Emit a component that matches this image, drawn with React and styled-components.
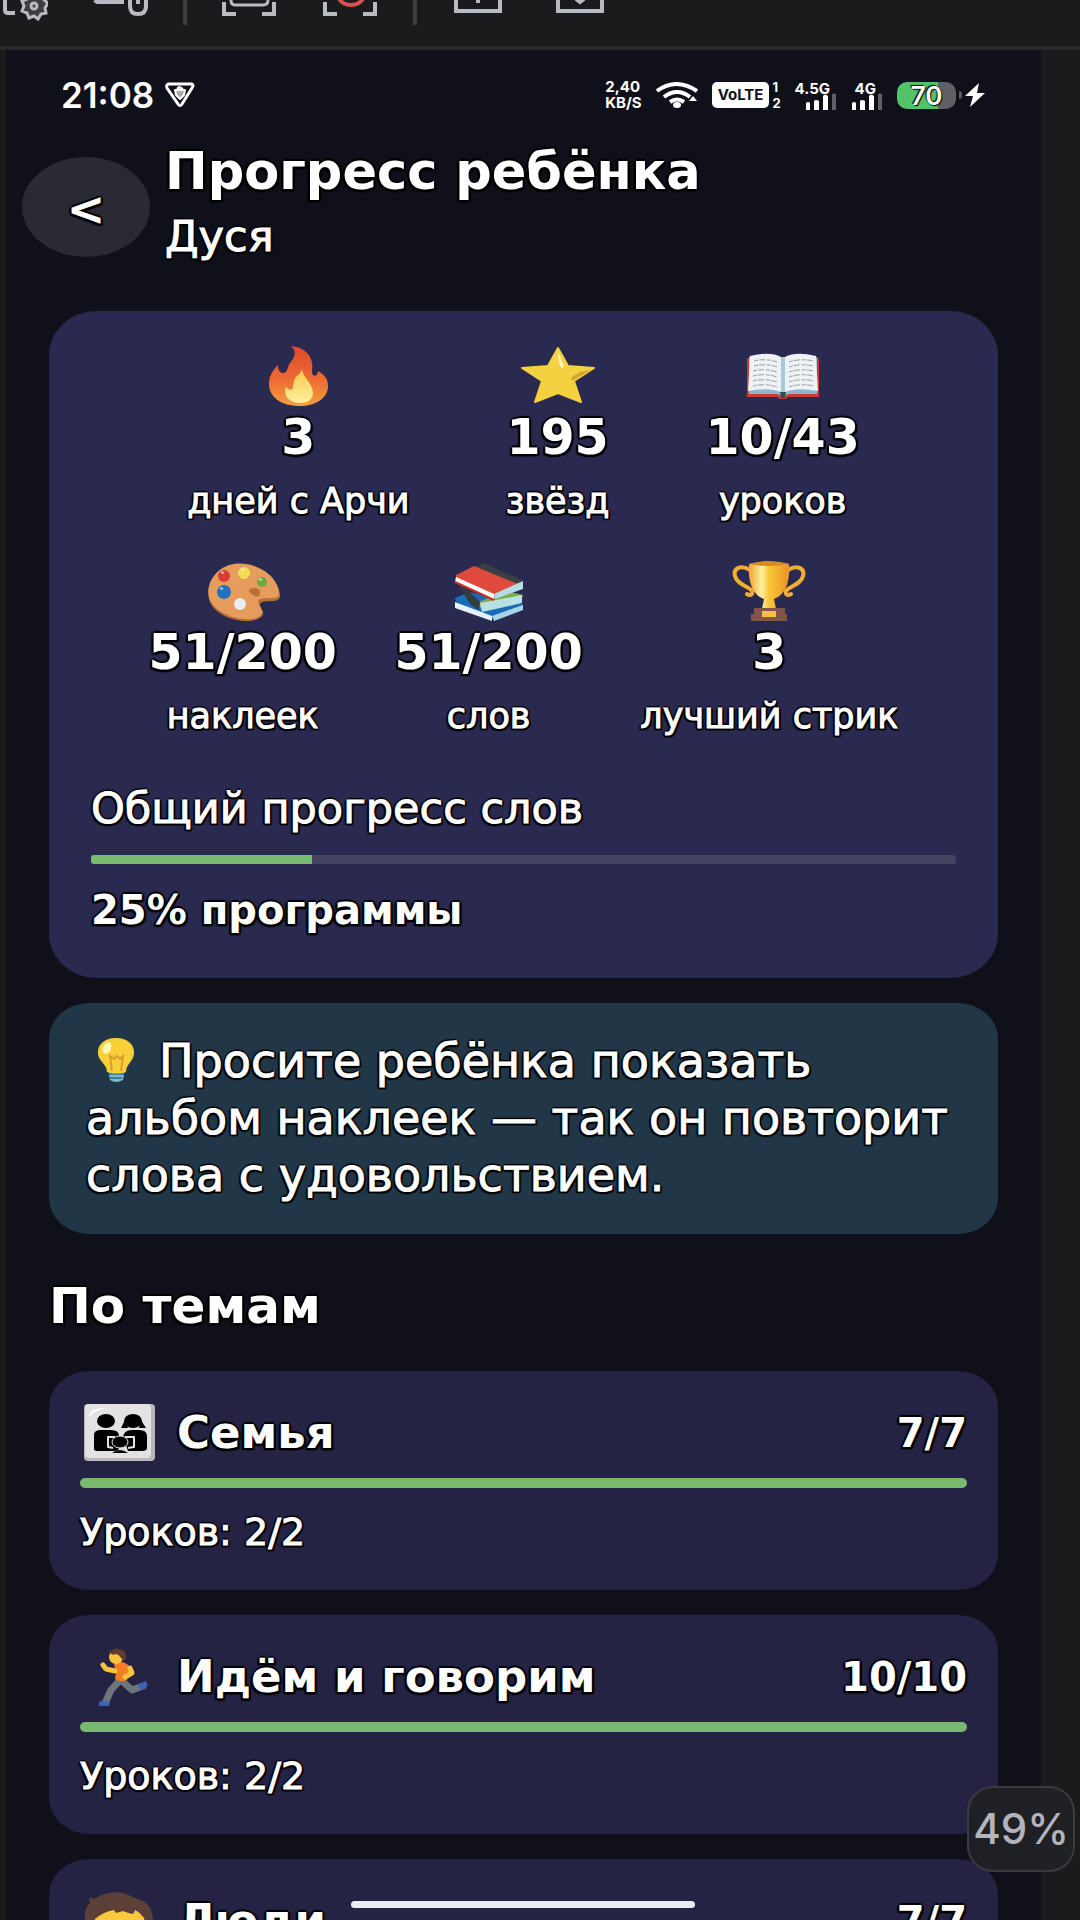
import React from "react";
import styled, { createGlobalStyle } from "styled-components";

const GlobalStyle = createGlobalStyle`
  * {
    box-sizing: border-box;
  }
  body {
    margin: 0;
    overflow: hidden;
    background: #1a1b1c;
    color: #fff;
    font-family: "DejaVu Sans", Verdana, sans-serif;
  }
  h1, h2, h3, p {
    margin: 0;
  }
`;

const outline = `
  text-shadow: 2px 0 1px #000, -2px 0 1px #000, 0 2px 1px #000,
    0 -2px 1px #000, 1px 2px 1px #000, -1px 2px 1px #000,
    2px 2px 1px #000, -2px 2px 1px #000;
`;

const medium = `
  -webkit-text-stroke: 1px #fff;
  ${outline}
`;

const Window = styled.div`
  position: relative;
  display: flex;
  flex-direction: column;
  height: 100vh;
  overflow: hidden;
`;

const Toolbar = styled.div`
  display: flex;
  flex-shrink: 0;
  gap: 33px;
  height: 50px;
  border-bottom: 4px solid #29292d;
`;

const ToolGroup = styled.div`
  display: flex;
  gap: 44px;
`;

const ToolButton = styled.button`
  height: 24px;
  padding: 0;
  border: none;
  background: none;
  svg {
    display: block;
  }
`;

const Divider = styled.span`
  width: 4px;
  height: 25px;
  background: #3c3d40;
`;

const Screen = styled.main`
  flex: 1;
  min-height: 0;
  margin: 0 39px 0 6px;
  overflow: hidden;
  background: #10101a;
`;

const StatusBar = styled.div`
  display: flex;
  justify-content: space-between;
  align-items: center;
  height: 90px;
  padding: 0 55px;
`;

const StatusGroup = styled.div`
  display: flex;
  align-items: center;
  gap: ${({ gap }) => gap}px;
`;

const Clock = styled.time`
  font: 600 35px/40px Inter, sans-serif;
`;

const Tiny = styled.span`
  display: block;
  font: 700 ${({ size }) => size}px/16px Inter, sans-serif;
`;

const Volte = styled.span`
  padding: 0 6px;
  border-radius: 5px;
  background: #fff;
  color: #10101a;
  font: 700 15px/26px Inter, sans-serif;
`;

const Battery = styled.span`
  width: 59px;
  border-radius: 10px;
  background: linear-gradient(90deg, #54c268 70%, #5f6066 70%);
  font: 600 26px/27px Inter, sans-serif;
  text-align: center;
  text-shadow: 1px 1px 1px #000, -1px -1px 1px #000;
`;

const Header = styled.header`
  display: flex;
  align-items: center;
  gap: 15px;
  height: 132px;
  padding-left: 16px;
`;

const BackButton = styled.button`
  width: 128px;
  height: 100px;
  margin-top: 2px;
  padding: 3px 0 0;
  border: none;
  border-radius: 50%;
  background: #2a2a34;
  color: #fff;
  font: bold 46px "DejaVu Sans", sans-serif;
  ${outline}
`;

const HeaderText = styled.div`
  align-self: flex-start;
`;

const Title = styled.h1`
  font-size: 51px;
  line-height: 64px;
  ${outline}
`;

const Subtitle = styled.p`
  font-size: 43px;
  line-height: 64px;
  ${medium}
`;

const Content = styled.div`
  display: flex;
  flex-direction: column;
  gap: 25px;
  padding: 39px 43px 0;
`;

const SummaryCard = styled.section`
  padding: 34px 42px 44px;
  border-radius: 48px / 44px;
  background: #2a294f;
`;

const StatRow = styled.div`
  display: flex;
  justify-content: space-evenly;
  margin-bottom: ${({ last }) => (last ? 46 : 37)}px;
`;

const Stat = styled.div`
  display: flex;
  flex-direction: column;
  align-items: center;
`;

const StatValue = styled.strong`
  margin: 3px 0 13px;
  font-size: 49px;
  line-height: 56px;
  ${outline}
`;

const StatLabel = styled.span`
  font-size: 35px;
  line-height: 44px;
  ${medium}
`;

const ProgressLabel = styled.p`
  font-size: ${({ strong }) => (strong ? 40 : 43)}px;
  font-weight: ${({ strong }) => (strong ? "bold" : "normal")};
  line-height: 48px;
  ${({ strong }) => (strong ? outline : medium)}
`;

const Track = styled.div`
  height: ${({ thick }) => (thick ? 10 : 9)}px;
  margin: ${({ thick }) => (thick ? "15px 0 24px" : "23px 0 22px")};
  border-radius: ${({ thick }) => (thick ? 5 : 3)}px;
  background: #454361;
  overflow: hidden;
`;

const Fill = styled.div`
  height: 100%;
  background: #7aba6f;
`;

const Tip = styled.p`
  padding: 30px 37px;
  border-radius: 40px / 36px;
  background: #213747;
  font-size: 46px;
  line-height: 57px;
  ${medium}
  svg {
    margin: 0 23px -6px 10px;
  }
`;

const SectionTitle = styled.h2`
  margin: 19px 0 12px;
  font-size: 50px;
  line-height: 56px;
  ${outline}
`;

const ThemeCard = styled.article`
  padding: 32px 31px 38px;
  border-radius: 40px / 36px;
  background: #242343;
`;

const ThemeHead = styled.div`
  display: flex;
  align-items: center;
  gap: 18px;
  height: 60px;
`;

const ThemeName = styled.h3`
  flex: 1;
  font-size: 45px;
  line-height: 60px;
  ${outline}
`;

const ThemeCount = styled.strong`
  font-size: 40px;
  line-height: 60px;
  ${outline}
`;

const Lessons = styled.p`
  font-size: 38px;
  line-height: 40px;
  ${medium}
`;

const HomeBar = styled.div`
  position: absolute;
  bottom: 12px;
  left: 351px;
  width: 344px;
  height: 7px;
  border-radius: 4px;
  background: #ebecf3;
`;

const ZoomBadge = styled.div`
  position: absolute;
  right: 5px;
  bottom: 48px;
  width: 108px;
  border: 2px solid #3a3b3f;
  border-radius: 26px;
  background: rgba(33, 34, 38, 0.95);
  color: #b4b4bc;
  font: 500 42px/82px Inter, sans-serif;
  text-align: center;
`;

const Emoji = ({ children, width = 74, height = 62 }) => (
  <svg width={width} height={height} viewBox={`0 0 ${width} ${height}`} aria-hidden="true">
    {children}
  </svg>
);

const Flame = () => (
  <Emoji>
    <defs>
      <linearGradient id="fire" x1="0" y1="0" x2="0" y2="1">
        <stop offset="0" stopColor="#dc4a2c" />
        <stop offset="0.55" stopColor="#ec6a33" />
        <stop offset="1" stopColor="#f5a13c" />
      </linearGradient>
      <linearGradient id="core" x1="0" y1="0" x2="0" y2="1">
        <stop offset="0" stopColor="#f6c944" />
        <stop offset="1" stopColor="#fdf0a0" />
      </linearGradient>
    </defs>
    <path fill="url(#fire)" d="M30 1c12 1 20 8 21 17 1 5-1 9 1 12 3 2 5-1 5-4 7 4 10 8 10 15 0 12-12 20-28 20C20 61 8 52 8 39c0-8 4-14 9-19 0 5 2 8 5 8 5 0 4-6 7-10 5-6 7-11 1-17z" />
    <path fill="url(#core)" d="M41 23c0 9 11 15 11 25 0 7-6 10-13 10-9 0-15-5-15-13l1-3c2 3 5 4 7 1 1-4 0-7 3-11 3-3 6-5 6-9z" />
  </Emoji>
);

const Star = () => (
  <Emoji>
    <path fill="#f5d142" stroke="#f5d142" strokeWidth="2" strokeLinejoin="round" d="M37 3l10 18 26 2-20 13 7 21-23-9-23 9 7-21L1 23l26-2z" />
    <path fill="#fff5b0" d="M37 6l6 15-2 3q-4-4-4-18z" />
    <path fill="#d3a532" d="M70 25L53 35q-5 1-2-3 7-6 19-7z" />
  </Emoji>
);

const OpenBook = () => (
  <Emoji>
    <path fill="#c93c34" d="M1 13h72v39H42l-3 2h-5l-3-2H1z" />
    <path fill="#88b9cc" d="M3 12h68v37H42l-5 4-5-4H3z" />
    <path fill="#eef2f4" d="M4 11q20-5 31 1v35q-12-5-33-1z" />
    <path fill="#eef2f4" d="M70 11q-20-5-31 1v35q12-5 33-1z" />
    <path fill="#a6cad8" d="M35 12h4v36h-4z" />
    <path stroke="#9aa0a5" strokeWidth="1" strokeDasharray="4 1 6 2" fill="none" d="M8 16q12-3 23 1M8 21q12-3 23 1M7 26q12-3 24 1M7 31q12-3 24 1M7 36q12-3 24 1M7 41q12-3 24 1M43 17q12-4 24-1M43 22q12-4 24-1M43 27q12-4 25-1M43 32q12-4 25-1M43 37q12-4 25-1M43 42q12-4 25-1" />
    <path fill="#37474f" d="M34 47h6l-1 6h-4z" />
  </Emoji>
);

const Palette = () => (
  <Emoji>
    <path fill="#b96f38" d="M28 5C8 8-3 30 5 44c8 15 39 22 50 13 7-6-6-11 1-15 7-2 18 1 18-6C74 18 50 1 28 5z" />
    <path fill="#e59c5d" fillRule="evenodd" d="M28 4C8 7-3 28 5 42c8 14 38 22 49 14 7-6-7-14 0-17 7-2 19 1 19-5C73 16 50 1 28 4zm21 24q5 0 5 5t-5 3-6-5q0-3 6-3z" />
    <circle cx="18" cy="16" r="6" fill="#d63c35" />
    <circle cx="38" cy="13" r="6" fill="#f6dc52" />
    <circle cx="56" cy="22" r="5" fill="#6fa644" />
    <circle cx="18" cy="32" r="7" fill="#2172ba" />
    <circle cx="34" cy="44" r="6" fill="#eceff1" />
    <path stroke="#fff" strokeWidth="2" opacity=".6" d="M15 12l3 1M35 9l3 1M53 19l3 1M14 28l3 1" />
  </Emoji>
);

const Books = () => (
  <Emoji>
    <path fill="#1b6cb8" d="M3 38l14-6 54 12v4L44 60 4 42z" />
    <path fill="#e4f2f8" d="M3 42l37 14v5L3 48z" />
    <path fill="#a8d5e8" d="M40 56l31-11v5L42 61z" />
    <path fill="#7cae42" d="M24 43l30-12 17 4-1 3-40 11z" />
    <path fill="#b9e0e2" d="M28 43l42-8v8l-40 9z" />
    <path fill="#333c42" d="M4 21l10 7 14 14-1 8-9-6z" />
    <path fill="#3b3f44" d="M23 7l9-4 38 17-6 7z" />
    <path fill="#df4a3d" d="M4 15L22 6l44 18-24 11L4 18z" />
    <path fill="#fff" d="M4 17l38 17v6L3 22z" />
    <path fill="#b5dbe9" d="M42 34l29-13v8L43 39z" />
    <path stroke="#c02f2a" strokeWidth="2" fill="none" d="M3 22l39 18" />
  </Emoji>
);

const Trophy = () => (
  <Emoji>
    <defs>
      <linearGradient id="gold">
        <stop offset="0" stopColor="#f0a22c" />
        <stop offset="0.32" stopColor="#fff0a0" />
        <stop offset="0.5" stopColor="#fac636" />
        <stop offset="1" stopColor="#e8922a" />
      </linearGradient>
    </defs>
    <path fill="none" stroke="#f3ad34" strokeWidth="4" strokeLinecap="round" d="M18 10C8 4 1 9 3 16c2 9 14 10 17 15 1 4-2 5-5 3M56 10c10-6 17-1 15 6-2 9-14 10-17 15-1 4 2 5 5 3" />
    <path fill="url(#gold)" d="M17 4q20-5 40 0c1 13-1 30-15 35l2 10H30l2-10C18 34 16 17 17 4z" />
    <path fill="#d98a24" d="M17 4q20 4 40 0-20-6-40 0z" />
    <path fill="#825548" d="M22 48h31v6h2v7H19v-7h3z" />
    <path fill="#f5c044" d="M30 51h14v6H30z" />
  </Emoji>
);

const Bulb = () => (
  <Emoji width={40} height={46}>
    <path fill="#7fb6c8" d="M12 32h17l-2 11q-7 4-13 0z" />
    <path stroke="#397f9e" strokeWidth="2" d="M13 37h15M14 41h12" />
    <path fill="#f7d038" d="M20 1c12 0 19 7 18 16-1 8-8 10-8 18q-9 3-19 0C11 27 3 25 2 17 1 8 8 1 20 1z" />
    <path fill="none" stroke="#dc9b2d" strokeWidth="2" d="M16 34l-2-15 4 3 3-3 3 3 3-3-2 15" />
    <ellipse cx="11" cy="11" rx="4" ry="6" fill="#fff6b5" transform="rotate(25 11 11)" />
  </Emoji>
);

const Family = () => (
  <Emoji width={79} height={60}>
    <rect x="4" y="1" width="71" height="57" rx="4" fill="#b8b8b8" />
    <rect x="5" y="1" width="66" height="54" rx="4" fill="#e2e2e2" />
    <path fill="#fff" d="M9 15q-1-10 17-10Q12 8 9 15z" />
    <ellipse cx="26" cy="18" rx="9" ry="7" />
    <ellipse cx="53" cy="18" rx="9" ry="7" />
    <path d="M45 17l-4 8h7zM61 17l5 8h-7zM14 46V32q0-5 7-5h10q8 0 8 6v12q0 3-5 3H18q-4 0-4-2zM43 34q1-7 9-7h7q8 0 8 6v12q0 3-5 3H48z" />
    <path fill="none" stroke="#e2e2e2" strokeWidth="2" d="M35 34h-7v10l5 1M45 34h9v10l-6 1" />
    <ellipse cx="40" cy="39" rx="8" ry="6" stroke="#e2e2e2" />
    <path d="M32 50q8-6 16 0z" />
  </Emoji>
);

const Runner = () => (
  <Emoji width={79} height={60}>
    <path fill="none" stroke="#6c757b" strokeWidth="7" strokeLinecap="round" strokeLinejoin="round" d="M41 32L31 43l-5 11M43 35l9 8 11-4" />
    <path fill="#3b62b8" d="M20 54l10 1-1 4H19q-1-3 1-5zM58 38l7-4q4 3 1 7l-6 2z" />
    <path fill="#f47e27" d="M34 17q9-5 16 3l-3 13q-7 3-12-1l1-6z" />
    <path fill="none" stroke="#f8c43d" strokeWidth="5" strokeLinecap="round" strokeLinejoin="round" d="M35 24l-9-2-3-4M50 21l2 5-7 4" />
    <ellipse cx="36" cy="10" rx="7" ry="7" fill="#f8c43d" />
    <path fill="#643c2d" d="M29 5q8-7 16 0 3 7-2 9-3-6-7-7-4 2-7-2z" />
  </Emoji>
);

const Person = () => (
  <Emoji width={79} height={60}>
    <ellipse cx="40" cy="40" rx="29" ry="25" fill="#fbc93f" />
    <path fill="#5c4037" d="M9 7q4 0 5 1Q34-5 55 7q19 4 18 26l-4 14-5-20-8-9-3 5q-6-1-10-3l-7 2-2-3q-11 2-19 9l-4 18Q-1 22 10 12q-1-2-1-5z" />
    <path stroke="#43302a" strokeWidth="3" fill="none" d="M20 35q6-4 12 0M46 35q6-4 12 0" />
  </Emoji>
);

const FRAME_CORNERS = "M3 4v12h12M53 4v12H41";

const rows = [
  [
    { icon: <Flame />, value: "3", label: "дней с Арчи" },
    { icon: <Star />, value: "195", label: "звёзд" },
    { icon: <OpenBook />, value: "10/43", label: "уроков" },
  ],
  [
    { icon: <Palette />, value: "51/200", label: "наклеек" },
    { icon: <Books />, value: "51/200", label: "слов" },
    { icon: <Trophy />, value: "3", label: "лучший стрик" },
  ],
];

const themes = [
  { icon: <Family />, name: "Семья", count: "7/7", lessons: "2/2" },
  { icon: <Runner />, name: "Идём и говорим", count: "10/10", lessons: "2/2" },
  { icon: <Person />, name: "Люди", count: "7/7" },
];

const Tool = ({ label, width = 58, children }) => (
  <ToolButton aria-label={label}>
    <svg width={width} height="24" viewBox={`0 0 ${width} 24`} fill="none" stroke="#b9bbc2" strokeWidth="4">
      {children}
    </svg>
  </ToolButton>
);

const Progress = ({ value, thick, label }) => (
  <Track thick={thick ? 1 : undefined} role="progressbar" aria-label={label} aria-valuenow={value}>
    <Fill style={{ width: `${value}%` }} />
  </Track>
);

const Signal = () => (
  <svg width="32" height="17" viewBox="0 0 32 17">
    <path fill="#fff" d="M1 10q2-2 4 0v7H1zM9 8q2-2 5 0v9H9zM18 3q2-3 5 0v14h-5z" />
    <path fill="#5f6066" d="M27 1q2-1 4 0v16h-4z" />
  </svg>
);

const Network = styled.span`
  display: flex;
  flex-direction: column;
  align-items: flex-end;
  height: 29px;
  ${Tiny} {
    padding-right: 7px;
  }
  svg {
    flex-shrink: 0;
    margin-top: -4px;
  }
`;

const App = () => (
  <Window>
    <GlobalStyle />
    <Toolbar>
      <ToolGroup>
        <Tool label="Настройки" width={48}>
          <path d="M5 0v10q0 3 3 3h7" />
          <path d="M34-7l4 3 5-1 1 5 4 3-3 5 1 5-5 1-3 5-4-3-5 2-2-5-5-2 2-5-2-5 5-2 2-5z" strokeWidth="3" fill="#3c3d40" />
          <circle cx="34" cy="6" r="3" strokeWidth="3" />
        </Tool>
        <Tool label="Перо">
          <path d="M3 0q1 2 4 2h25M38 0v6q0 8 8 8t8-8V0M46 0v4" />
        </Tool>
      </ToolGroup>
      <Divider />
      <ToolGroup>
        <Tool label="Снимок экрана">
          <path d={FRAME_CORNERS} transform="translate(1 -2)" />
          <path d="M11 0q0 5 4 5h28q5 0 5-5" strokeWidth="3" />
        </Tool>
        <Tool label="Запись экрана">
          <path d={FRAME_CORNERS} transform="translate(0 -2)" />
          <path d="M16-3q4 8 13 8t13-8" stroke="#d9524d" />
        </Tool>
      </ToolGroup>
      <Divider />
      <ToolGroup>
        <Tool label="Импорт">
          <path d="M6 0v11h44V0M28 0v3" />
        </Tool>
        <Tool label="Экспорт">
          <path d="M6 0v11h44V0M24-1l4 3 4-3" />
        </Tool>
      </ToolGroup>
    </Toolbar>

    <Screen>
      <StatusBar>
        <StatusGroup gap={11}>
          <Clock>21:08</Clock>
          <svg width="30" height="26" viewBox="0 0 30 26" fill="none" stroke="#fff" strokeWidth="3" strokeLinejoin="round">
            <path d="M3 2h24q2 1 0 4L17 22q-2 3-4 0L2 6Q1 3 3 2z" />
            <path d="M10 8h10l-1 5-4 4-4-4zM12 7l2-2 4 2" fill="#aaa" strokeWidth="2" />
          </svg>
        </StatusGroup>
        <StatusGroup gap={14}>
          <div>
            <Tiny size={15}>2,40</Tiny>
            <Tiny size={15}>KB/S</Tiny>
          </div>
          <svg width="42" height="27" viewBox="0 0 42 27" fill="none" stroke="#fff" strokeWidth="4">
            <path d="M1 9q19-14 40 0M8 15q13-10 26 0M14 20q7-5 14 0" />
            <ellipse cx="21" cy="23" rx="4" ry="3" fill="#fff" stroke="none" />
            <path d="M33 19l4-5 4 5z" fill="#fff" stroke="none" />
          </svg>
          <StatusGroup gap={3}>
            <Volte>VoLTE</Volte>
            <div>
              <Tiny size={13}>1</Tiny>
              <Tiny size={13}>2</Tiny>
            </div>
          </StatusGroup>
          <Network>
            <Tiny size={15}>4.5G</Tiny>
            <Signal />
          </Network>
          <Network>
            <Tiny size={15}>4G</Tiny>
            <Signal />
          </Network>
          <StatusGroup gap={3}>
            <Battery>70</Battery>
            <svg width="27" height="24" viewBox="0 0 27 24">
              <path fill="#5f6066" d="M0 8q3 0 3 4t-3 4z" />
              <path fill="#fff" d="M20 0L6 13h8l-3 11 15-14h-8z" />
            </svg>
          </StatusGroup>
        </StatusGroup>
      </StatusBar>

      <Header>
        <BackButton aria-label="Назад">&lt;</BackButton>
        <HeaderText>
          <Title>Прогресс ребёнка</Title>
          <Subtitle>Дуся</Subtitle>
        </HeaderText>
      </Header>

      <Content>
        <SummaryCard>
          {rows.map((row, i) => (
            <StatRow key={i} last={i === rows.length - 1 ? 1 : undefined}>
              {row.map((stat) => (
                <Stat key={stat.label}>
                  {stat.icon}
                  <StatValue>{stat.value}</StatValue>
                  <StatLabel>{stat.label}</StatLabel>
                </Stat>
              ))}
            </StatRow>
          ))}
          <ProgressLabel>Общий прогресс слов</ProgressLabel>
          <Progress value={25.5} label="Общий прогресс слов" />
          <ProgressLabel strong="true">25% программы</ProgressLabel>
        </SummaryCard>

        <Tip>
          <Bulb />
          Просите ребёнка показать альбом наклеек — так он повторит слова с
          удовольствием.
        </Tip>

        <SectionTitle>По темам</SectionTitle>

        {themes.map((theme) => (
          <ThemeCard key={theme.name}>
            <ThemeHead>
              {theme.icon}
              <ThemeName>{theme.name}</ThemeName>
              <ThemeCount>{theme.count}</ThemeCount>
            </ThemeHead>
            <Progress value={100} thick label={theme.name} />
            {theme.lessons && <Lessons>Уроков: {theme.lessons}</Lessons>}
          </ThemeCard>
        ))}
      </Content>
    </Screen>

    <HomeBar />
    <ZoomBadge>49%</ZoomBadge>
  </Window>
);

export default App;
